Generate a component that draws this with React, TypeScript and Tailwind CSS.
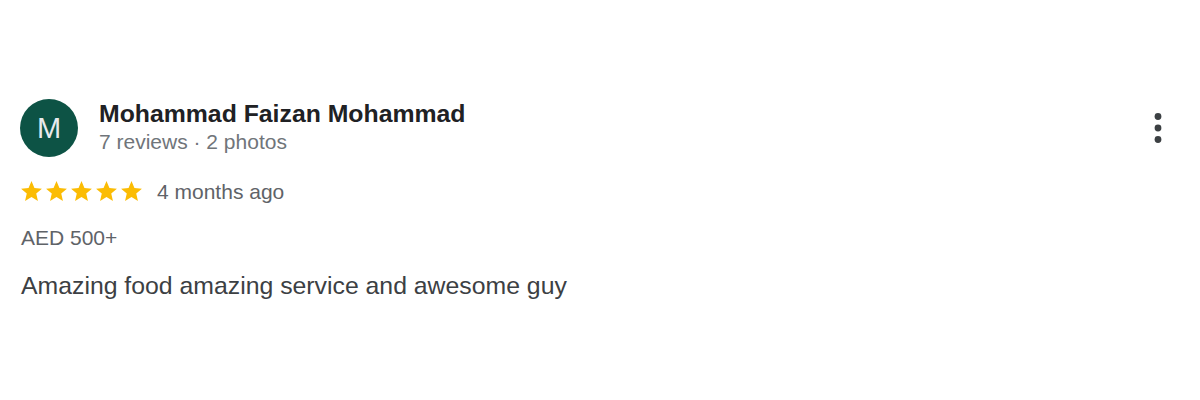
import React from "react";

const Star = () => (
  <svg width="25" height="25" viewBox="0 0 24 24" className="block">
    <path
      fill="#fbbc04"
      d="M12 17.27L18.18 21l-1.64-7.03L22 9.24l-7.19-.61L12 2 9.19 8.63 2 9.24l5.46 4.73L5.82 21z"
    />
  </svg>
);

export default function App() {
  return (
    <div className="w-[1200px] h-[400px] bg-white font-['Liberation_Sans',Arial,sans-serif]">
      <div className="pt-[99px] pl-[19px] pr-[30px]">
        <div className="flex items-center">
          <div className="flex items-start flex-1">
            <div className="w-[58px] h-[58px] rounded-full bg-[#0d5345] flex items-center justify-center text-[#e8eaed] text-[29px] leading-none ml-[1px]">
              M
            </div>
            <div className="ml-[21px]">
              <div className="text-[24.8px] leading-[30px] font-bold text-[#202124]">
                Mohammad Faizan Mohammad
              </div>
              <div className="text-[21px] leading-[26px] text-[#70757a]">
                7 reviews · 2 photos
              </div>
            </div>
          </div>
          <svg width="24" height="36" viewBox="0 0 24 36" className="block">
            <circle cx="12" cy="6.5" r="3.4" fill="#3c4043" />
            <circle cx="12" cy="18" r="3.4" fill="#3c4043" />
            <circle cx="12" cy="29.5" r="3.4" fill="#3c4043" />
          </svg>
        </div>
        <div className="mt-[22px] flex items-center h-[25px]">
          <div className="flex">
            <Star />
            <Star />
            <Star />
            <Star />
            <Star />
          </div>
          <span className="ml-[13px] text-[21px] leading-[24px] text-[#5f6368]">
            4 months ago
          </span>
        </div>
        <div className="mt-[21px] ml-[2px] text-[21px] leading-[26px] text-[#5f6368]">
          AED 500+
        </div>
        <div className="mt-[20px] ml-[2px] text-[24.8px] leading-[30px] text-[#3c4043]">
          Amazing food amazing service and awesome guy
        </div>
      </div>
    </div>
  );
}
